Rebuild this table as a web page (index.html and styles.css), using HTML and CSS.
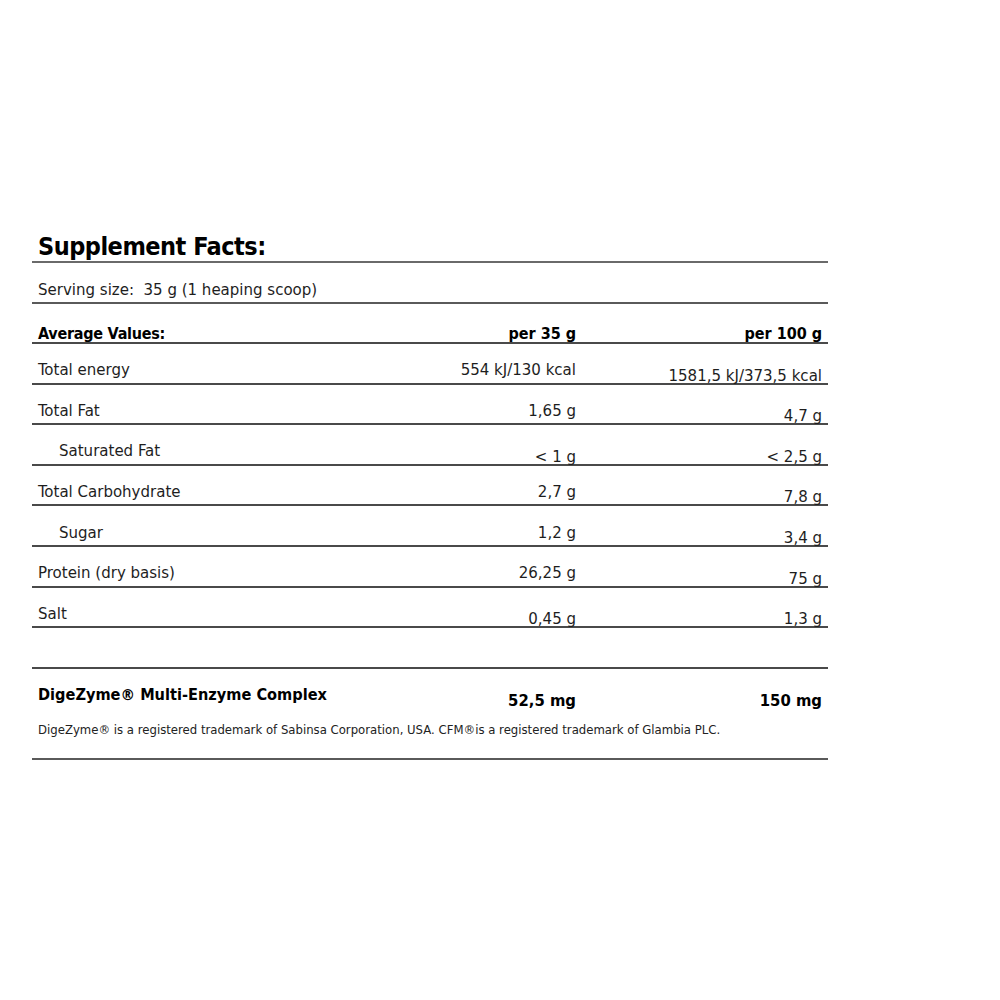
FILE: index.html
```html
<!DOCTYPE html>
<html lang="en">
<head>
<meta charset="utf-8">
<title>Supplement Facts</title>
<link rel="stylesheet" href="styles.css">
</head>
<body>
<div class="facts">
  <div class="title-row"><h1 class="title">Supplement Facts:</h1></div>
  <div class="serving">Serving size:&nbsp; 35 g (1 heaping scoop)</div>
  <div class="row head">
    <span class="label down">Average Values:</span>
    <span class="c2 down">per 35 g</span>
    <span class="c3 down">per 100 g</span>
  </div>
  <div class="row">
    <span class="label up">Total energy</span>
    <span class="c2 up">554 kJ/130 kcal</span>
    <span class="c3 down">1581,5 kJ/373,5 kcal</span>
  </div>
  <div class="row">
    <span class="label up">Total Fat</span>
    <span class="c2 up">1,65 g</span>
    <span class="c3 down">4,7 g</span>
  </div>
  <div class="row">
    <span class="label up sub">Saturated Fat</span>
    <span class="c2 down">&lt; 1 g</span>
    <span class="c3 down">&lt; 2,5 g</span>
  </div>
  <div class="row">
    <span class="label up">Total Carbohydrate</span>
    <span class="c2 up">2,7 g</span>
    <span class="c3 down">7,8 g</span>
  </div>
  <div class="row">
    <span class="label up sub">Sugar</span>
    <span class="c2 up">1,2 g</span>
    <span class="c3 down">3,4 g</span>
  </div>
  <div class="row">
    <span class="label up">Protein (dry basis)</span>
    <span class="c2 up">26,25 g</span>
    <span class="c3 down">75 g</span>
  </div>
  <div class="row">
    <span class="label up">Salt</span>
    <span class="c2 down">0,45 g</span>
    <span class="c3 down">1,3 g</span>
  </div>
  <div class="row empty"></div>
  <div class="enzyme">
    <div class="enzyme-line">
      <span class="label enzyme-name">DigeZyme® Multi-Enzyme Complex</span>
      <span class="c2 enzyme-val">52,5 mg</span>
      <span class="c3 enzyme-val">150 mg</span>
    </div>
    <p class="note">DigeZyme® is a registered trademark of Sabinsa Corporation, USA. CFM®is a registered trademark of Glambia PLC.</p>
  </div>
</div>
</body>
</html>
```

FILE: styles.css
```css
html, body {
  margin: 0;
  padding: 0;
  background: #ffffff;
}

body {
  font-family: "DejaVu Sans Condensed", "DejaVu Sans", sans-serif;
  font-stretch: semi-condensed;
  color: #1e1e1e;
}

.facts {
  width: 796px;
  margin: 222px 0 0 32px;
}

.title-row {
  height: 39px;
  border-bottom: 2px solid #6a6a6a;
  display: flex;
  align-items: flex-end;
}

.title {
  margin: 0 0 0 6px;
  font-size: 25px;
  font-weight: bold;
  line-height: 24px;
  padding-bottom: 2px;
  color: #000;
  letter-spacing: -0.5px;
}

.serving {
  box-sizing: border-box;
  height: 40.5px;
  border-bottom: 2px solid #5a5a5a;
  padding: 0 0 5px 6px;
  font-size: 16.7px;
  line-height: 16px;
  display: flex;
  align-items: flex-end;
}

.row {
  height: 40.6px;
  box-sizing: border-box;
  border-bottom: 2px solid #4a4a4a;
  display: grid;
  grid-template-columns: 1fr 144px 246px;
  padding-right: 6px;
  font-size: 16.7px;
  line-height: 16px;
}

.row > span {
  align-self: end;
  white-space: nowrap;
}

.label {
  padding-left: 6px;
}

.label.sub {
  padding-left: 27px;
}

.c2, .c3 {
  text-align: right;
}

.up {
  padding-bottom: 5.5px;
}

.down {
  padding-bottom: 0;
}

.head {
  font-size: 16px;
  font-weight: bold;
  color: #000;
}

.head .label {
  letter-spacing: -0.25px;
}

.empty {
  height: 41px;
}

.enzyme {
  height: 91px;
  box-sizing: border-box;
  border-bottom: 2px solid #5a5a5a;
  padding-top: 17px;
}

.enzyme-line {
  display: grid;
  grid-template-columns: 1fr 144px 246px;
  padding-right: 6px;
  align-items: start;
  font-weight: bold;
  color: #000;
}

.enzyme-name {
  font-size: 16.2px;
  line-height: 18px;
}

.enzyme-val {
  font-size: 16.5px;
  line-height: 18px;
  padding-top: 6px;
}

.note {
  margin: 13px 0 0 6px;
  font-size: 13px;
  line-height: 14px;
  color: #222;
  white-space: nowrap;
}
```
